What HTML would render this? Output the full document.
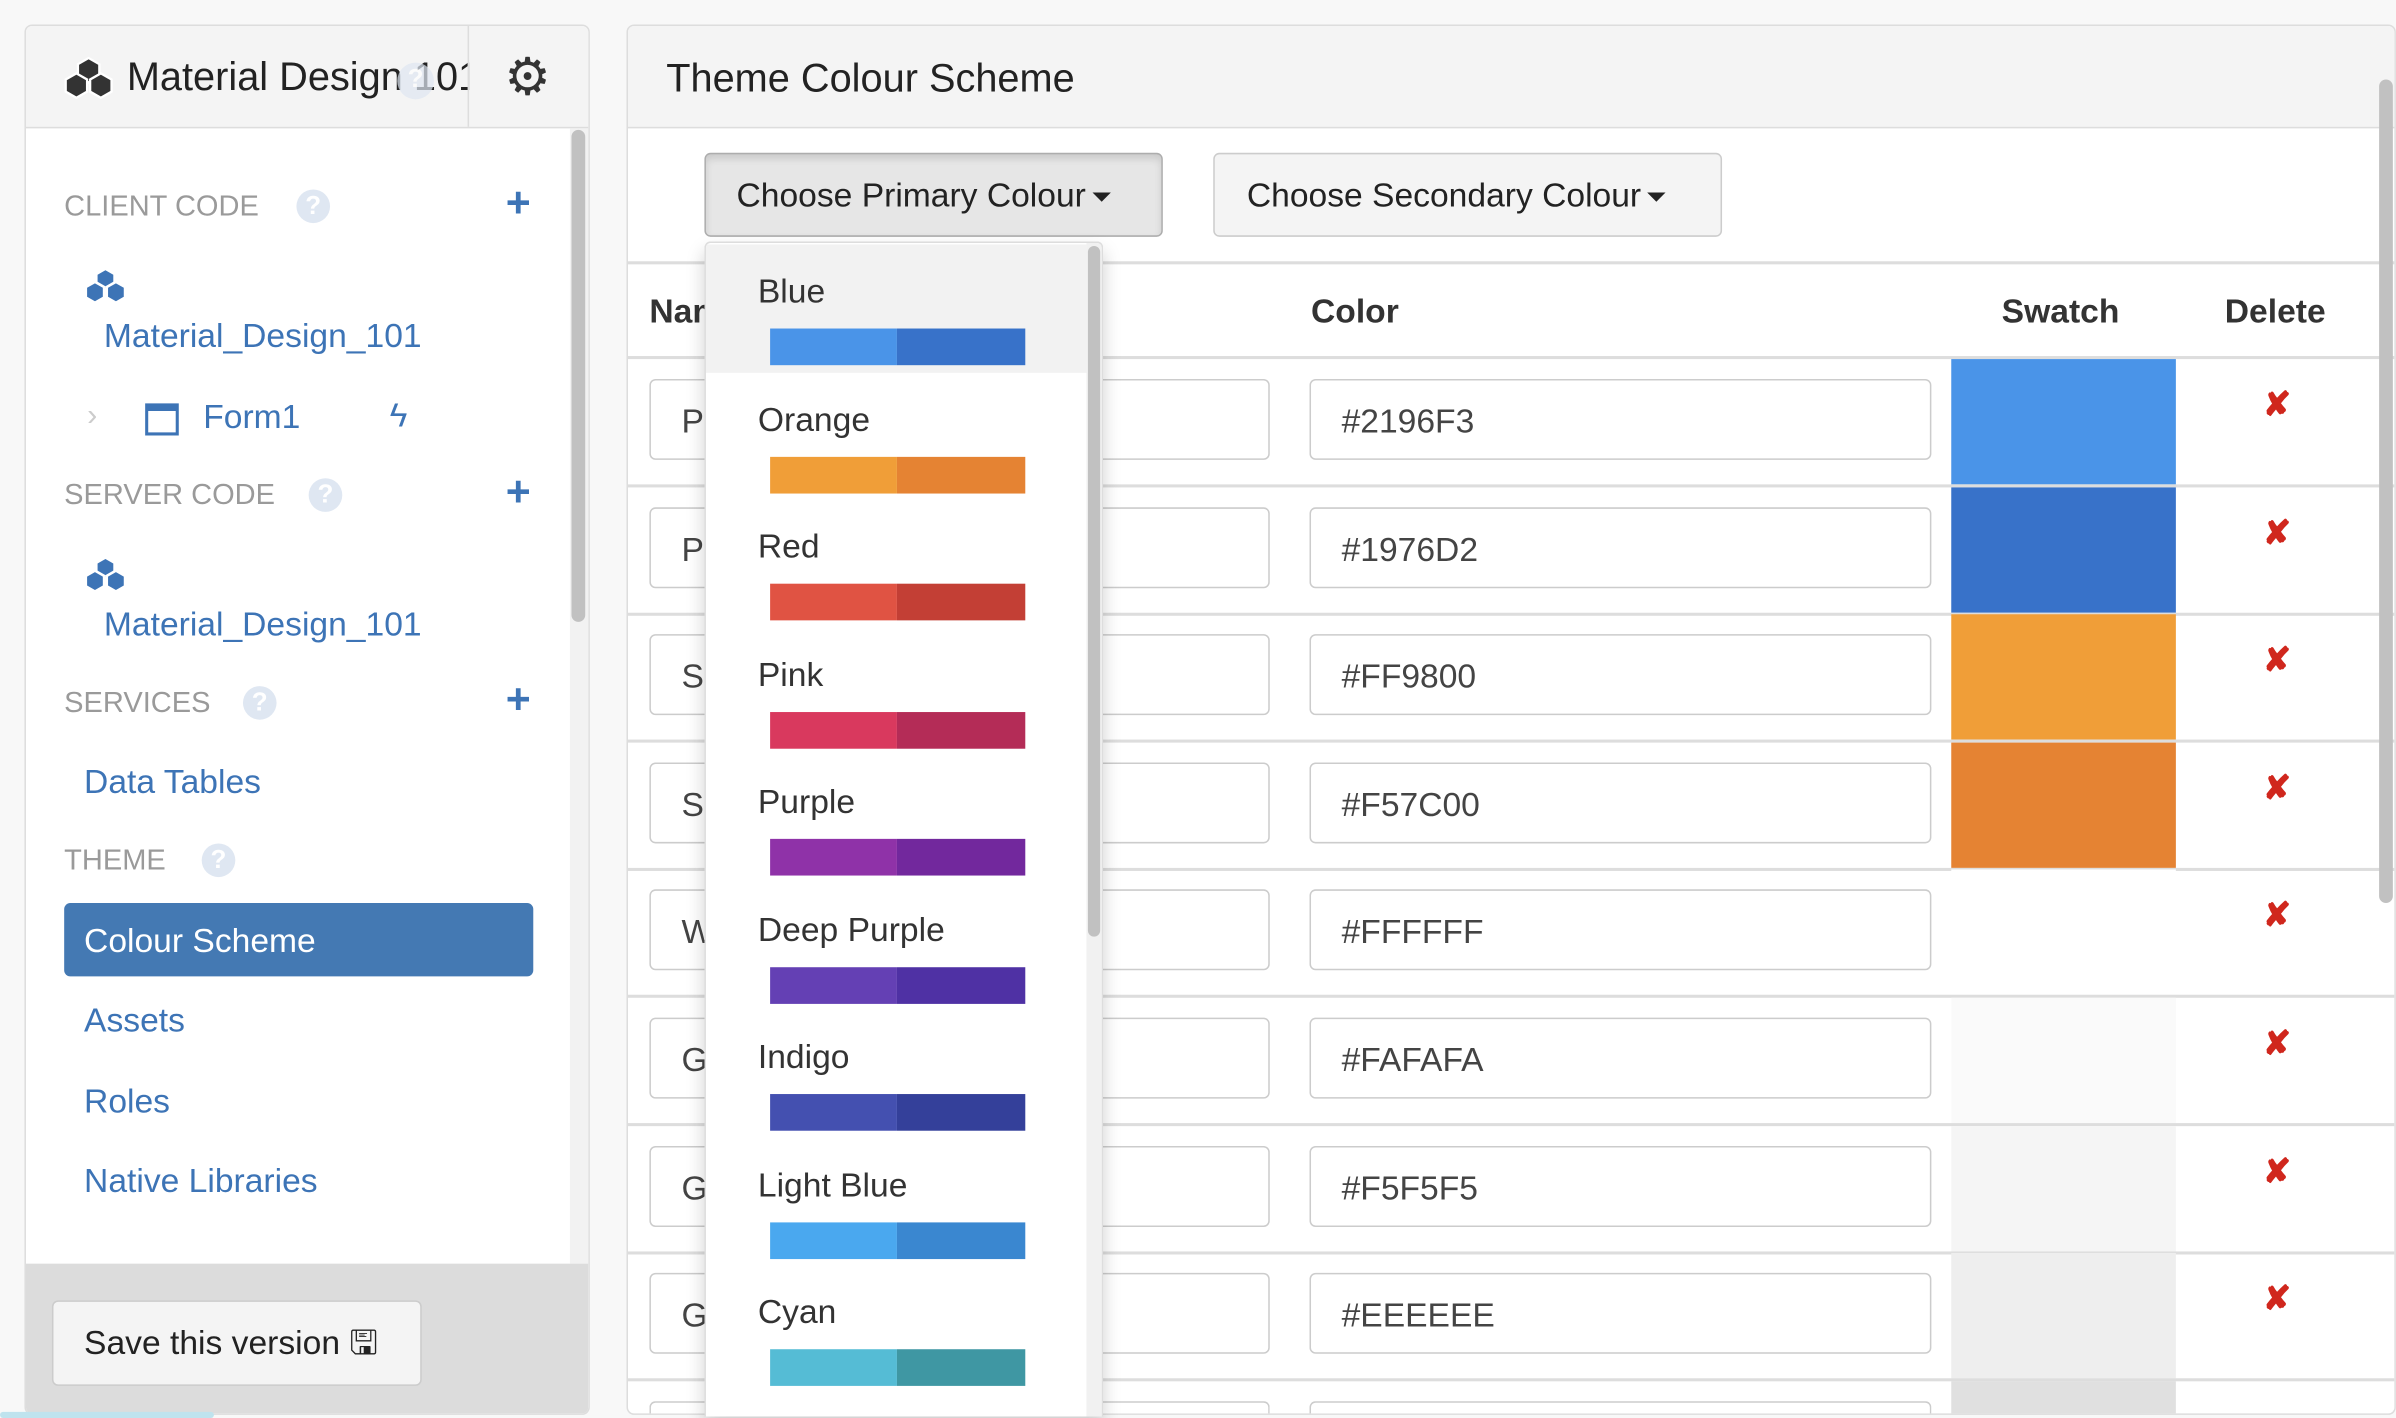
<!DOCTYPE html>
<html><head><meta charset="utf-8"><style>
html,body{margin:0;padding:0;width:2396px;height:1418px;overflow:hidden;background:#f8f8f8}
#s{position:absolute;left:0;top:0;width:1568px;height:928px;overflow:hidden;transform:scale(1.528);transform-origin:0 0;font-family:"Liberation Sans",Arial,sans-serif;color:#333}
.a{position:absolute}
.lp{left:16px;top:16px;width:368px;height:908px;border:1px solid #ddd;border-radius:5px;background:#fff;overflow:hidden}
.rp{left:410px;top:16px;width:1156px;height:908px;border:1px solid #ddd;border-radius:5px;background:#fff;overflow:hidden}
.lab{color:#9a9a9a;font-size:19px;left:25px}
.q{width:22px;height:22px;border-radius:50%;background:#dfe7f2;color:#fff;font-size:17px;font-weight:bold;text-align:center;line-height:22px}
.plus{color:#3d74b6;font-size:28px;font-weight:bold;left:314px}
.lnk{color:#3d74b6;font-size:22px}
.inp{border:1px solid #ccc;border-radius:4px;height:53px;background:#fff;font-size:22px;line-height:53px;padding-left:20px;box-sizing:border-box;color:#444;overflow:hidden}
.x{color:#d0271d;font-size:22px;font-weight:bold;left:1070px}
.item{left:0;width:250px;height:84px}
.item span{position:absolute;left:34px;top:18px;font-size:22px;color:#333}
.item i{position:absolute;left:42px;top:55px;width:83px;height:24px}
.item b{position:absolute;left:125px;top:55px;width:84px;height:24px}
.car{display:inline-block;width:0;height:0;border-left:6px solid transparent;border-right:6px solid transparent;border-top:6px solid #222;vertical-align:middle;margin-left:4px}
</style></head><body><div id="s">
<div class="a lp">
 <div class="a" style="left:0;top:0;width:368px;height:66px;background:#f4f4f4;border-bottom:1px solid #ddd"></div>
 <svg class="a" style="left:24px;top:20px" width="34" height="28" viewBox="0 0 34 28"><g fill="#333" stroke="#fff" stroke-width="1.5"><path d="M17 1l7 4v8l-7 4-7-4V5z"/><path d="M9 11l7 4v8l-7 4-7-4v-8z"/><path d="M25 11l7 4v8l-7 4-7-4v-8z"/></g></svg>
 <div class="a" style="left:66px;top:18px;font-size:26px;color:#222;white-space:nowrap;width:224px;overflow:hidden">Material Design 101</div>
 <div class="a q" style="left:243px;top:24px;width:24px;height:24px;opacity:.7">?</div>
 <div class="a" style="left:289px;top:0;width:79px;height:66px;border-left:1px solid #ddd"></div>
 <div class="a" style="left:313px;top:14px;font-size:34px;color:#333">⚙</div>
 <div class="a" style="left:356px;top:67px;width:12px;height:743px;background:#f2f2f2"></div>
 <div class="a" style="left:357px;top:68px;width:9px;height:322px;border-radius:5px;background:#c1c1c1"></div>
 <div class="a lab" style="top:108px">CLIENT CODE</div><div class="a q" style="left:177px;top:107px">?</div><div class="a plus" style="top:100px">+</div>
 <svg class="a" style="left:37px;top:158px" width="30" height="24" viewBox="0 0 34 28"><g fill="#3d74b6" stroke="#fff" stroke-width="2"><path d="M17 1l7 4v8l-7 4-7-4V5z"/><path d="M9 11l7 4v8l-7 4-7-4v-8z"/><path d="M25 11l7 4v8l-7 4-7-4v-8z"/></g></svg>
 <div class="a lnk" style="left:51px;top:190px">Material_Design_101</div>
 <div class="a" style="left:40px;top:244px;color:#ccc;font-size:20px">›</div>
 <div class="a" style="left:78px;top:247px;width:18px;height:14px;border:2px solid #3d74b6;border-top-width:5px"></div>
 <div class="a lnk" style="left:116px;top:243px">Form1</div>
 <div class="a" style="left:238px;top:242px;color:#3d74b6;font-size:22px">ϟ</div>
 <div class="a lab" style="top:297px">SERVER CODE</div><div class="a q" style="left:185px;top:296px">?</div><div class="a plus" style="top:289px">+</div>
 <svg class="a" style="left:37px;top:347px" width="30" height="24" viewBox="0 0 34 28"><g fill="#3d74b6" stroke="#fff" stroke-width="2"><path d="M17 1l7 4v8l-7 4-7-4V5z"/><path d="M9 11l7 4v8l-7 4-7-4v-8z"/><path d="M25 11l7 4v8l-7 4-7-4v-8z"/></g></svg>
 <div class="a lnk" style="left:51px;top:379px">Material_Design_101</div>
 <div class="a lab" style="top:433px">SERVICES</div><div class="a q" style="left:142px;top:432px">?</div><div class="a plus" style="top:425px">+</div>
 <div class="a lnk" style="left:38px;top:482px">Data Tables</div>
 <div class="a lab" style="top:536px">THEME</div><div class="a q" style="left:115px;top:535px">?</div>
 <div class="a" style="left:25px;top:574px;width:307px;height:48px;background:#4479b3;border-radius:4px"></div>
 <div class="a lnk" style="left:38px;top:586px;color:#fff">Colour Scheme</div>
 <div class="a lnk" style="left:38px;top:638px">Assets</div>
 <div class="a lnk" style="left:38px;top:691px">Roles</div>
 <div class="a lnk" style="left:38px;top:743px">Native Libraries</div>
 <div class="a" style="left:0;top:810px;width:368px;height:98px;background:#dcdcdc"></div>
 <div class="a" style="left:17px;top:834px;width:240px;height:54px;background:#f4f4f4;border:1px solid #ccc;border-radius:4px;font-size:22px;line-height:54px;text-indent:20px;color:#222">Save this version 🖫</div>
</div>
<div class="a rp">
 <div class="a" style="left:0;top:0;width:1156px;height:66px;background:#f4f4f4;border-bottom:1px solid #ddd"></div>
 <div class="a" style="left:25px;top:19px;font-size:26px;color:#222">Theme Colour Scheme</div>
 <div class="a" style="left:50px;top:83px;width:298px;height:53px;background:#e6e6e6;border:1px solid #adadad;border-radius:4px;box-shadow:inset 0 3px 5px rgba(0,0,0,.12);font-size:22px;line-height:53px;text-indent:20px;color:#222">Choose Primary Colour<span class="car"></span></div>
 <div class="a" style="left:383px;top:83px;width:331px;height:53px;background:#f4f4f4;border:1px solid #ccc;border-radius:4px;font-size:22px;line-height:53px;text-indent:21px;color:#222">Choose Secondary Colour<span class="car"></span></div>
 <div class="a" style="left:0;top:154px;width:1156px;height:2px;background:#ddd"></div>
 <div class="a" style="left:14px;top:174px;font-size:22px;font-weight:bold">Name</div>
 <div class="a" style="left:447px;top:174px;font-size:22px;font-weight:bold">Color</div>
 <div class="a" style="left:899px;top:174px;font-size:22px;font-weight:bold">Swatch</div>
 <div class="a" style="left:1045px;top:174px;font-size:22px;font-weight:bold">Delete</div>
 <div class="a" style="left:0;top:216px;width:1156px;height:2px;background:#ddd"></div>
 <div id="rows"></div>
 <div class="a" style="left:1146px;top:35px;width:9px;height:539px;border-radius:5px;background:#c1c1c1"></div>
</div>
<div class="a" style="left:461px;top:158px;width:259px;height:768px;overflow:hidden;background:#fff;border:1px solid #ddd;border-bottom:0;border-radius:4px 4px 0 0;box-shadow:0 6px 12px rgba(0,0,0,.18)" id="dd">
 <div class="a" style="left:249px;top:0;width:10px;height:768px;background:#f1f1f1"></div>
 <div class="a" style="left:250px;top:2px;width:8px;height:452px;border-radius:4px;background:#c1c1c1"></div>
</div>
<div class="a" style="left:0;top:924px;width:140px;height:4px;background:#bfe3ee;border-radius:3px"></div>
</div>
<script>
var R=[["Primary","#2196F3","#4a94e8"],["Primary Dark","#1976D2","#3872c9"],["Secondary","#FF9800","#f09e38"],["Secondary Dark","#F57C00","#e58333"],["White","#FFFFFF","#fff"],["Grey 50","#FAFAFA","#fafafa"],["Grey 100","#F5F5F5","#f5f5f5"],["Grey 200","#EEEEEE","#eeeeee"],["Grey 300","#E0E0E0","#e0e0e0"]];
var h="";R.forEach(function(r,i){var y=218+i*83.6,last=i==8;
h+='<div class="a" style="left:866px;top:'+y+'px;width:147px;height:'+(last?22:82)+'px;background:'+r[2]+'"></div>';
h+='<div class="a inp" style="left:14px;top:'+(y+13)+'px;width:406px;'+(last?'height:9px;border-bottom:0;border-radius:4px 4px 0 0;':'')+'">'+(last?'':r[0])+'</div>';
h+='<div class="a inp" style="left:446px;top:'+(y+13)+'px;width:407px;'+(last?'height:9px;border-bottom:0;border-radius:4px 4px 0 0;':'')+'">'+(last?'':r[1])+'</div>';
if(!last){h+='<div class="a x" style="top:'+(y+17)+'px">✘</div>';
h+='<div class="a" style="left:0;top:'+(y+82)+'px;width:1156px;height:2px;background:#ddd"></div>';}});
document.getElementById("rows").outerHTML=h;
var D=[["Blue","#4a94e8","#3872c9"],["Orange","#f09e38","#e58333"],["Red","#e05343","#c33f35"],["Pink","#d9395e","#b42c57"],["Purple","#8f32a8","#72289d"],["Deep Purple","#6440b4","#4f31a4"],["Indigo","#4450b0","#34409a"],["Light Blue","#4aa8ef","#3a87d0"],["Cyan","#55bcd5","#3f97a3"]];
var g="";D.forEach(function(d,i){var y=1+i*83.5;
g+='<div class="a item" style="top:'+y+'px;'+(i==0?'background:#f2f2f2':'')+'"><span>'+d[0]+'</span><i style="background:'+d[1]+'"></i><b style="background:'+d[2]+'"></b></div>';});
document.getElementById("dd").insertAdjacentHTML("afterbegin",g);
</script>
</body></html>
